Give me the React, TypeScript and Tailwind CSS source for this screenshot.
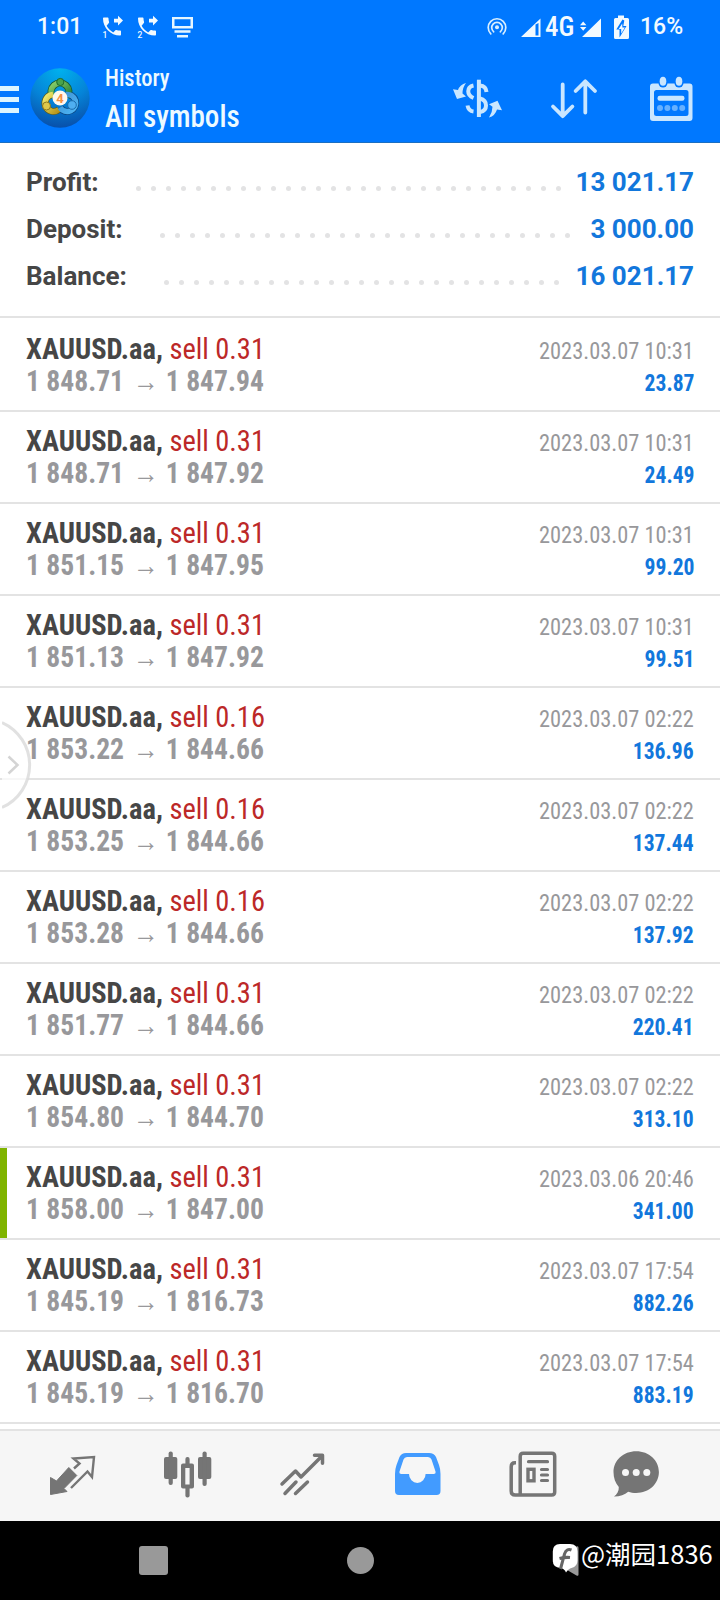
type Deal = {
  volume: string;
  open: string;
  close: string;
  time: string;
  profit: string;
  marked?: boolean;
};

const summary = [
  { label: "Profit:", value: "13 021.17", dots: 29 },
  { label: "Deposit:", value: "3 000.00", dots: 28 },
  { label: "Balance:", value: "16 021.17", dots: 27 },
];

const deals: Deal[] = [
  { volume: "0.31", open: "1 848.71", close: "1 847.94", time: "2023.03.07 10:31", profit: "23.87" },
  { volume: "0.31", open: "1 848.71", close: "1 847.92", time: "2023.03.07 10:31", profit: "24.49" },
  { volume: "0.31", open: "1 851.15", close: "1 847.95", time: "2023.03.07 10:31", profit: "99.20" },
  { volume: "0.31", open: "1 851.13", close: "1 847.92", time: "2023.03.07 10:31", profit: "99.51" },
  { volume: "0.16", open: "1 853.22", close: "1 844.66", time: "2023.03.07 02:22", profit: "136.96" },
  { volume: "0.16", open: "1 853.25", close: "1 844.66", time: "2023.03.07 02:22", profit: "137.44" },
  { volume: "0.16", open: "1 853.28", close: "1 844.66", time: "2023.03.07 02:22", profit: "137.92" },
  { volume: "0.31", open: "1 851.77", close: "1 844.66", time: "2023.03.07 02:22", profit: "220.41" },
  { volume: "0.31", open: "1 854.80", close: "1 844.70", time: "2023.03.07 02:22", profit: "313.10" },
  { volume: "0.31", open: "1 858.00", close: "1 847.00", time: "2023.03.06 20:46", profit: "341.00", marked: true },
  { volume: "0.31", open: "1 845.19", close: "1 816.73", time: "2023.03.07 17:54", profit: "882.26" },
  { volume: "0.31", open: "1 845.19", close: "1 816.70", time: "2023.03.07 17:54", profit: "883.19" },
];

function ForwardedCall({ sim }: { sim: string }) {
  return (
    <svg width="24" height="25" viewBox="0 0 24 25" fill="#f2faff">
      <path d="M6.62 10.79c1.44 2.83 3.76 5.14 6.59 6.59l2.2-2.2c.27-.27.67-.36 1.02-.24 1.12.37 2.33.57 3.57.57.55 0 1 .45 1 1V19.500c0 .55-.45 1-1 1-9.39 0-17-7.610-17-17 0-.55.45-1 1-1h3.5c.55 0 1 .45 1 1 0 1.250.2 2.450.57 3.570.11.350.03.740-.25 1.020z" />
      <path d="M18 10.500l5-5-5-4.700v2.900h-4v3.900h4z" />
      <text x="2.500" y="22.500" fontSize="8.500" fontFamily="Roboto">
        {sim}
      </text>
    </svg>
  );
}

function StatusBar() {
  return (
    <div className="flex h-[54px] items-center pr-[38px] pl-[37px] text-[23px] font-medium text-[#f2faff]">
      <span className="w-[63px]">1:01</span>
      <ForwardedCall sim="1" />
      <span className="w-[11px]" />
      <ForwardedCall sim="2" />
      <svg className="ml-[11px]" width="24" height="24" viewBox="170 14 24 24" fill="#e6f6ff">
        <path fillRule="evenodd" d="M172 16h21v11.500h-21zM174.500 18.300v6.700h16v-6.700z" />
        <path d="M174.500 29.300h16v2.500h-16zM177 34h11v2.500h-11z" />
      </svg>

      <div className="ml-auto flex items-center">
        <svg width="24" height="24" viewBox="486 14 24 24" fill="none" stroke="#d9efff" strokeWidth="1.700" strokeLinecap="round">
          <circle cx="498" cy="26.300" r="2" fill="#d9efff" stroke="none" />
          <path d="M494.700 30.800a5.300 5.300 0 1 1 6.600 0M491.800 32.800a8.800 8.800 0 1 1 12.400 0" />
        </svg>
        <svg className="ml-[11px]" width="22" height="24" viewBox="522 14 22 24" fill="#f2faff">
          <path fillRule="evenodd" d="M523 36l19.500-18.500V36zM537.500 23.500V34.500h3V22z" />
        </svg>
        <span className="ml-[3px] w-[28px] font-['Roboto_Condensed',Roboto,sans-serif] text-[27px]">4G</span>
        <svg className="ml-[6px]" width="24" height="24" viewBox="579 14 24 24" fill="#f2faff">
          <path d="M582 36l19-18.500V36zM580 24.300l3.200-3.800 3.200 3.800zM580 26l3.200 3.800 3.200-3.800z" />
        </svg>
        <svg className="ml-[9px]" width="18" height="26" viewBox="612 13 18 26">
          <path d="M618 14.500h6v2.500h3.500q1.500 0 1.500 1.500V36.500q0 1.500-1.500 1.500h-12q-1.500 0-1.500-1.500V18.500q0-1.500 1.500-1.500h2.500z" fill="#f2faff" />
          <path d="M622.500 18.500L616.300 28.500h3.200v8l7-11.500h-3.200l1-5.500z" fill="#0078ff" />
          <path d="M622.200 22.500l-3.500 5.500h2.500v4.500l3.700-6h-2.500z" fill="#f2faff" />
        </svg>
        <span className="ml-[10px] w-[42px]">16%</span>
      </div>
    </div>
  );
}

function Logo() {
  return (
    <svg width="60" height="60" viewBox="30 68 60 60">
      <defs>
        <radialGradient id="disc" cx="0.5" cy="0" r="1">
          <stop offset="0" stopColor="#00b2ee" />
          <stop offset="0.55" stopColor="#0584d8" />
          <stop offset="1" stopColor="#0850ab" />
        </radialGradient>
        <linearGradient id="green" x1="0" y1="0" x2="1" y2="1">
          <stop offset="0" stopColor="#8cd06a" />
          <stop offset="1" stopColor="#217c35" />
        </linearGradient>
        <linearGradient id="yellow" x1="0" y1="0" x2="1" y2="1">
          <stop offset="0" stopColor="#f0ec70" />
          <stop offset="1" stopColor="#b79218" />
        </linearGradient>
        <linearGradient id="blue" x1="0" y1="0" x2="1" y2="1">
          <stop offset="0" stopColor="#3e91d3" />
          <stop offset="1" stopColor="#4db5f5" />
        </linearGradient>
      </defs>
      <circle cx="60" cy="98" r="29.700" fill="url(#disc)" />
      <g fill="none" strokeWidth="5.500">
        <path d="M52.500 97a9 9 0 1 1 15 0" stroke="#16572f" strokeWidth="7" />
        <path d="M59 109.500a8.500 8.500 0 1 1-6-15" stroke="#5d5d20" strokeWidth="7" />
        <path d="M66 94.500a8.500 8.500 0 1 1-6 13" stroke="#0b4885" strokeWidth="7" />
        <path d="M52.500 97a9 9 0 1 1 15 0" stroke="url(#green)" />
        <path d="M59 109.500a8.500 8.500 0 1 1-6-15" stroke="url(#yellow)" />
        <path d="M66 94.500a8.500 8.500 0 1 1-6 13" stroke="url(#blue)" />
      </g>
      <circle cx="60.300" cy="82" r="3.600" fill="#49a34c" stroke="#1e6a2c" />
      <circle cx="46.500" cy="106" r="4" fill="#ddc84b" stroke="#8a7720" />
      <circle cx="72" cy="105" r="4.300" fill="#4faef0" stroke="#1c6bab" />
      <circle cx="60" cy="98" r="7.500" fill="#fff8ee" />
      <text x="60" y="102.800" textAnchor="middle" fontSize="13" fontWeight="700" fontFamily="Roboto" fill="#f59042">
        4
      </text>
    </svg>
  );
}

function AppBar() {
  return (
    <div className="flex h-[88px] items-center pr-[24px] font-['Roboto_Condensed',Roboto,sans-serif] text-[#edfaff]">
      <div className="mt-[3px] flex w-[19px] flex-col gap-[6.500px]">
        <span className="h-[4.500px] bg-[#dcf5ff]" />
        <span className="h-[4.500px] bg-[#dcf5ff]" />
        <span className="h-[4.500px] bg-[#dcf5ff]" />
      </div>
      <div className="ml-[11px]">
        <Logo />
      </div>
      <div className="-mt-[2px] ml-[15px] flex flex-col">
        <span className="origin-left scale-x-[0.94] text-[24px] leading-[38px] font-medium">History</span>
        <span className="origin-left scale-x-[0.91] text-[32px] leading-[38px] font-medium">All symbols</span>
      </div>

      <div className="mt-px ml-auto flex items-center">
        {/* currency switch */}
        <svg width="54" height="44" viewBox="450 76 54 44" fill="none" stroke="#c9e6ff" strokeWidth="4">
          <path d="M478.900 78.700V116" />
          <path d="M473.500 84.500C466.500 86 466.500 94 473.500 97M467.500 104.500Q468.500 110 473.500 110.500M480 84.500Q486 85 486.500 91M480 97.500C488 99.500 488 109.500 480 111" />
          <path d="M466 82q-6 1.500-8 7l-5-.8 4 9.800 9-2.500-3.500-3q0-6 3.500-10.500zM489 116.500q6-1.500 8-8l5 .8-4.500-9.500-8.500 3.500 3.500 2.500q0 5.500-3.500 10.700z" fill="#c9e6ff" stroke="none" />
        </svg>
        {/* sort order */}
        <svg className="ml-[46px]" width="48" height="44" viewBox="550 76 48 44" fill="none" stroke="#c9e6ff" strokeWidth="3.800" strokeLinecap="round" strokeLinejoin="round">
          <path d="M562.700 83.500V115M553 105.500l9.700 9.700 9.700-9.700M585.300 111.500V80.500M575.600 90l9.700-9.700L595 90" />
        </svg>
        {/* period */}
        <svg className="ml-[50px]" width="48" height="48" viewBox="648 73.500 48 48">
          <path fillRule="evenodd" d="M653 82h36.500q3 0 3 3v31.500q0 3-3 3H653q-3 0-3-3V85q0-3 3-3zM656.500 88.500q-2.500 0-2.500 2.500v21q0 2.500 2.500 2.500h29.500q2.500 0 2.500-2.500v-21q0-2.500-2.500-2.500z" fill="#c9e6ff" />
          <rect x="658.500" y="74" width="9" height="12" rx="4.500" fill="#0078ff" />
          <rect x="674.500" y="74" width="9" height="12" rx="4.500" fill="#0078ff" />
          <ellipse cx="663" cy="79.800" rx="3.300" ry="4.500" fill="#c9e6ff" />
          <ellipse cx="679" cy="79.800" rx="3.300" ry="4.500" fill="#c9e6ff" />
          <rect x="657.500" y="94.300" width="27" height="5" rx="2.200" fill="#c9e6ff" />
          <g fill="#66b0ff">
            <circle cx="660" cy="106.500" r="3" />
            <circle cx="667.400" cy="106.500" r="3" />
            <circle cx="674.800" cy="106.500" r="3" />
            <circle cx="682.200" cy="106.500" r="3" />
          </g>
        </svg>
      </div>
    </div>
  );
}

function SummaryRow({ label, value, dots }: { label: string; value: string; dots: number }) {
  return (
    <div className="flex h-[47px] items-center text-[26px] font-bold">
      <span className="text-[#464646]">{label}</span>
      <span className="mt-[11px] ml-[37px] flex gap-[10px]">
        {Array.from({ length: dots }, (_, i) => (
          <span key={i} className="size-[5px] rounded-full bg-[#e3e3e4]" />
        ))}
      </span>
      <span className="ml-auto text-[#1277dc]">{value}</span>
    </div>
  );
}

function DealRow({ deal, first }: { deal: Deal; first: boolean }) {
  return (
    <div
      className={`flex border-b-2 border-[#e3e3e3] pb-[13px] font-['Roboto_Condensed',Roboto,sans-serif] ${
        first ? "pt-[15px]" : "pt-[13px]"
      }`}
    >
      {deal.marked && <span className="-mt-[13px] -mb-[13px] w-[7px] bg-[#7fb400]" />}
      <div className={`flex-1 pr-[26px] ${deal.marked ? "pl-[19px]" : "pl-[26px]"}`}>
        <div className="flex h-8 items-baseline justify-between leading-8">
          <span className="origin-left scale-x-[0.948] text-[30px] text-[#bc2828]">
            <span className="font-bold text-[#464646]">XAUUSD.aa,</span> sell {deal.volume}
          </span>
          <span className="origin-right scale-x-[0.934] text-[24px] text-[#98989b]">{deal.time}</span>
        </div>
        <div className="flex h-8 items-baseline justify-between leading-8">
          <span className="flex origin-left scale-x-[0.92] items-baseline text-[30px] font-bold text-[#98989b]">
            <span className="w-[116px]">{deal.open}</span>
            <span className="w-[36px] text-[28px] font-medium">→</span>
            <span>{deal.close}</span>
          </span>
          <span className="origin-right scale-x-[0.9] text-[24px] font-bold text-[#1277dc]">{deal.profit}</span>
        </div>
      </div>
    </div>
  );
}

function TabBar() {
  return (
    <div className="flex h-[92px] items-center border-t-2 border-[#e3e3e3] bg-[#f6f6f6] pb-[4px] pl-[48px]">
      {/* trade */}
      <svg width="50" height="50" viewBox="48 1449 50 50">
        <path d="M50.500 1477.500l6 3.500 12.300-13.500 8 8-12.800 13 3 3-16.500 3z" fill="#757575" stroke="#757575" strokeLinejoin="round" />
        <path d="M74 1468.500l5.500-5-6-5 20.500-1.500-2 20-4.500-5.500-16.500 16.500" fill="none" stroke="#757575" strokeWidth="2.400" />
      </svg>
      {/* chart */}
      <svg className="ml-[64px]" width="52" height="50" viewBox="162 1449 52 50" fill="#757575">
        <rect x="164" y="1457" width="13.300" height="22" rx="2" />
        <rect x="168.600" y="1451.500" width="4.200" height="33.500" rx="2" />
        <path fillRule="evenodd" d="M183 1463.500h9q2 0 2 2v21q0 2-2 2h-9q-2 0-2-2v-21q0-2 2-2zM185.300 1468v16.500h4.300V1468z" />
        <rect x="185.400" y="1457" width="4.200" height="9" rx="2" />
        <rect x="185.400" y="1485" width="4.200" height="12.500" rx="2" />
        <rect x="198" y="1457" width="13.300" height="22" rx="2" />
        <rect x="202.500" y="1451.500" width="4.200" height="34.500" rx="2" />
      </svg>
      {/* activity */}
      <svg className="ml-[64px]" width="50" height="50" viewBox="278 1449 50 50" fill="none" stroke="#757575" strokeWidth="3.500" strokeLinecap="round" strokeLinejoin="round">
        <path d="M282 1484l13.500-13 5.500 6 21.500-21.500M314.500 1455.200h8v8M285 1493.500l11-11.500M295.500 1493.500l12-11.500" />
      </svg>
      {/* history */}
      <svg className="ml-[64px]" width="50" height="50" viewBox="392 1449 50 50">
        <path
          fillRule="evenodd"
          d="M406 1453h23q5 0 7 4l3 8q1.500 4 1.500 9v17q0 4-4 4H399q-4 0-4-4v-17q0-5 1.500-9l3-8q2-4 6.500-4zM407 1457q-2.500 0-3.500 2.500l-4 12q-.5 2.500 2 2.500h7.500a8.300 9 0 0 0 16.600 0h7.900q2.500 0 2-2.500l-4-12q-1-2.500-3.500-2.500z"
          fill="#429bff"
        />
      </svg>
      {/* news */}
      <svg className="ml-[65px]" width="52" height="50" viewBox="507 1449 52 50" fill="none" stroke="#757575" strokeWidth="3.500">
        <path d="M516 1462.700h-1q-3.800 0-3.800 4V1491q0 4 4 4h36.500q3 0 3-3v-35.700q0-3-3-3h-28.500q-3 0-3 3V1495" />
        <rect x="528" y="1469.300" width="6" height="11.500" strokeWidth="3.400" />
        <path d="M528.500 1461.700h19M541.500 1469.500h6M541.500 1475h6M541.500 1480.500h6" strokeWidth="3.200" strokeLinecap="round" />
      </svg>
      {/* chat */}
      <svg className="ml-[53px]" width="50" height="50" viewBox="612 1449 50 50">
        <path d="M636.200 1451.200c12.800 0 22.700 9 22.700 20.900s-9.900 20.900-22.700 20.900c-3 0-5.500-.4-8-1.300-3.500 2.700-8.500 5-14.200 4.900 3-2.500 5-5.500 4.800-9.700-3.500-3.700-5.300-9-5.300-14.800 0-11.900 9.900-20.900 22.700-20.900z" fill="#757575" />
        <g fill="#f6f6f6">
          <circle cx="625.500" cy="1472.500" r="3.500" />
          <circle cx="636.200" cy="1472.500" r="3.500" />
          <circle cx="646.800" cy="1472.500" r="3.500" />
        </g>
      </svg>
    </div>
  );
}

function SystemNav() {
  return (
    <div className="flex h-[79px] items-center bg-black pl-[139px]">
      <span className="size-[29px] rounded-[3px] bg-[#999]" />
      <span className="ml-[179px] size-[27px] rounded-full bg-[#999]" />
      <svg className="ml-[176px]" width="30" height="36" viewBox="550 1542 30 36">
        <path d="M578.500 1547v26.500q0 2-2 1l-24-14 24-15q2-1 2 1.500z" fill="#999" />
        <path fillRule="evenodd" d="M560 1543h10q7.500 0 7.500 7.500v9q0 6-6 7.500-3 .5-5.500 4.500-1.500-4-5.500-4.500-7.700-.5-7.700-7.500v-9q0-7.500 7.200-7.500z" fill="#fff" />
        <path d="M571.500 1549q-5-2-7 4l-4 15M559.500 1557.500q5.500-1.500 10.500-1" fill="none" stroke="#666" strokeWidth="3" />
      </svg>
      <span className="mb-[14px] ml-px text-[25.500px] whitespace-nowrap text-white font-['Noto_Sans_CJK_SC',sans-serif]">
        @潮园1836
      </span>
    </div>
  );
}

export default function App() {
  return (
    <div className="relative flex h-[1600px] w-[720px] flex-col overflow-hidden bg-white font-['Roboto',sans-serif]">
      <header className="h-[143px] border-b border-[#1b6fc2] bg-[#0078ff]">
        <StatusBar />
        <AppBar />
      </header>

      <section className="h-[175px] border-b-2 border-[#e3e3e3] px-[26px] pt-[16px]">
        {summary.map((row) => (
          <SummaryRow key={row.label} {...row} />
        ))}
      </section>

      <main className="h-[1111px]">
        {deals.map((deal, i) => (
          <DealRow key={i} deal={deal} first={i === 0} />
        ))}
      </main>

      <TabBar />
      <SystemNav />

      {/* edge handle floating over the list */}
      <svg className="absolute top-[716px] left-[2px]" width="32" height="98" viewBox="2 716 32 98" fill="none">
        <path d="M2 722.500A46.500 46.500 0 0 1 2 807.500" fill="#ffffff" fillOpacity="0.7" stroke="#d9d9d9" strokeOpacity="0.8" strokeWidth="3" />
        <path d="M8.500 756.500l9 8.500-9 8.500" stroke="#d4d4d4" strokeWidth="2.500" />
      </svg>
    </div>
  );
}
